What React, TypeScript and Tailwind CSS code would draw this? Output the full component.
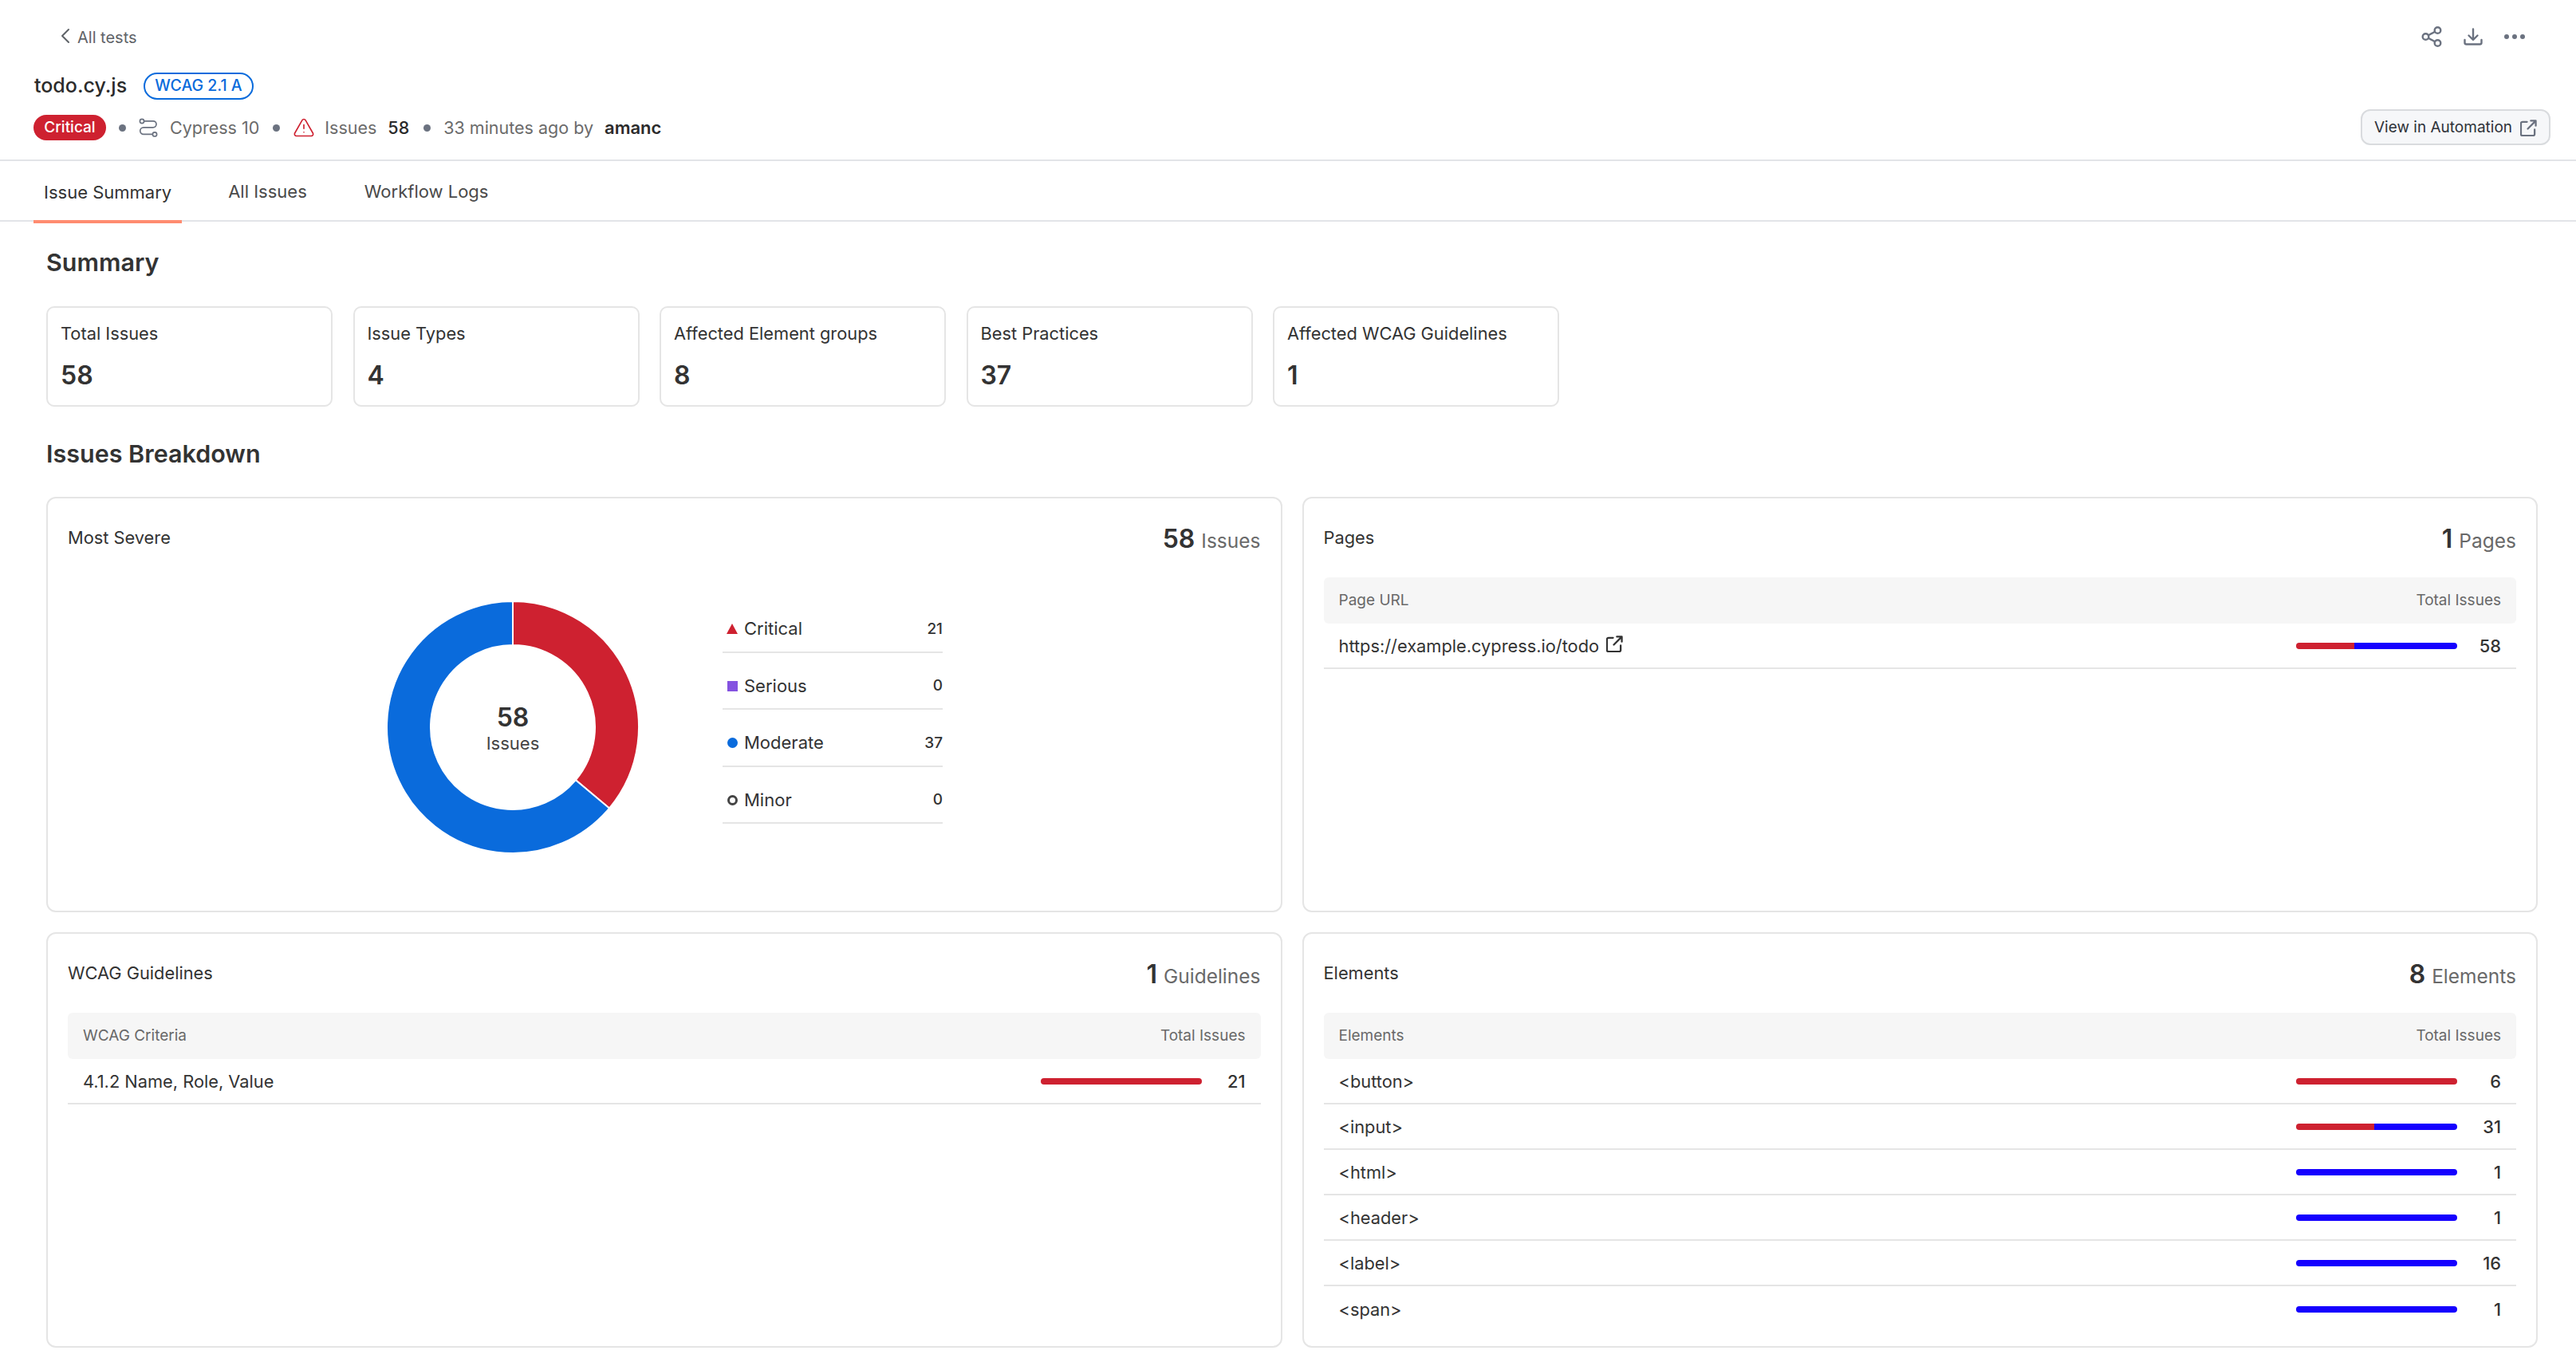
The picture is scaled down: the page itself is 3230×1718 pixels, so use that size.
import React from "react";
import { ChevronLeft, TriangleAlert } from "lucide-react";

function ExternalIcon({ className }: { className: string }) {
  return (
    <svg viewBox="0 0 22 22" fill="none" stroke="currentColor" strokeWidth="2.400" strokeLinecap="round" strokeLinejoin="round" className={className}>
      <path d="M9 3H3a2 2 0 0 0-2 2v14a2 2 0 0 0 2 2h14a2 2 0 0 0 2-2v-6" />
      <path d="M10 12 20 2M14 1.500h6.500V8" />
    </svg>
  );
}

function Dot() {
  return <span className="block w-[9px] h-[9px] rounded-full bg-[#6b7280] shrink-0" />;
}

function Bar({ red, blue }: { red: number; blue: number }) {
  return (
    <div className="flex w-[202px] h-[8px] rounded-full overflow-hidden shrink-0">
      {red > 0 && <div className="bg-[#ce2130]" style={{ width: `${red}%` }} />}
      {blue > 0 && <div className="bg-[#1500ff]" style={{ width: `${blue}%` }} />}
    </div>
  );
}

function Stat({ label, value }: { label: string; value: string }) {
  return (
    <div className="w-[359px] h-[126px] border-2 border-[#e5e5e5] rounded-[10px] pl-[16px] pt-[18px]">
      <div className="text-[21.800px] leading-[28px] text-[#333333]">{label}</div>
      <div className="mt-[20px] text-[32px] leading-[38px] font-semibold text-[#333333]">{value}</div>
    </div>
  );
}

function Panel({ title, count, unit, children }: { title: string; count: string; unit: string; children: React.ReactNode }) {
  return (
    <div className="h-[521px] border-2 border-[#e5e5e5] rounded-[12px] px-[25px]">
      <div className="flex justify-between items-center h-[99px]">
        <span className="text-[21.800px] text-[#333333]">{title}</span>
        <span className="flex items-baseline gap-[8px] pt-[3px]">
          <span className="text-[32px] font-semibold text-[#333333]">{count}</span>
          <span className="text-[24.500px] text-[#696969]">{unit}</span>
        </span>
      </div>
      {children}
    </div>
  );
}

function TableHead({ left }: { left: string }) {
  return (
    <div className="flex justify-between items-center h-[58px] bg-[#f6f6f6] rounded-[6px] px-[19px] text-[19px] text-[#696969]">
      <span>{left}</span>
      <span>Total Issues</span>
    </div>
  );
}

function Row({ label, count, red, blue, icon, last }: { label: string; count: string; red: number; blue: number; icon?: boolean; last?: boolean }) {
  return (
    <div className={last ? "flex items-center h-[57px] px-[19px] text-[21.800px] text-[#333333]" : "flex items-center h-[57px] border-b-2 border-[#e5e5e5] px-[19px] text-[21.800px] text-[#333333]"}>
      <span className="flex-1 flex items-center gap-[9px] pt-[1px]">
        {label}
        {icon && <ExternalIcon className="w-[21px] h-[21px] mb-[5px]" />}
      </span>
      <Bar red={red} blue={blue} />
      <span className="w-[55px] text-right font-medium pt-[1px]">{count}</span>
    </div>
  );
}

function LegendRow({ marker, label, value }: { marker: React.ReactNode; label: string; value: string }) {
  return (
    <div className="flex items-center h-[71.500px] pt-[14px] border-b-2 border-[#e5e5e5] text-[#333333]">
      <span className="w-[27px] pl-[6px] flex items-center">{marker}</span>
      <span className="flex-1 text-[22px]">{label}</span>
      <span className="text-[19px] font-medium">{value}</span>
    </div>
  );
}

function Donut() {
  return (
    <div className="relative w-[316px] h-[316px] shrink-0 mt-[7px]">
      <svg viewBox="0 0 316 316" className="w-full h-full">
        <path d="M158 0A158 158 0 0 1 279 259.600L236.900 224.200A103 103 0 0 0 158 55Z" fill="#ce2130" stroke="#ffffff" strokeWidth="2" />
        <path d="M279 259.600A158 158 0 1 1 158 0V55A103 103 0 1 0 236.900 224.200Z" fill="#0a6bdc" stroke="#ffffff" strokeWidth="2" />
      </svg>
      <div className="absolute inset-0 flex flex-col items-center justify-center pt-[3px] text-[#333333]">
        <span className="text-[32px] leading-[36px] font-semibold">58</span>
        <span className="text-[22px] leading-[28px] text-[#444444]">Issues</span>
      </div>
    </div>
  );
}

export default function App() {
  return (
    <div className="w-full h-[1718px] bg-white font-['Inter',sans-serif] overflow-hidden">
      <header className="relative h-[202px] border-b-2 border-[#e2e4e8]">
        <div className="flex items-center h-[94px] pl-[66px] text-[20px] text-[#5f6368]">
          <ChevronLeft className="w-[32px] h-[32px] -mt-[4px] -mr-[1px]" strokeWidth={1.500} />
          <span>All tests</span>
        </div>
        <div className="flex items-center gap-[21px] -mt-[3px] h-[34px] pl-[43px]">
          <span className="text-[25px] font-medium text-[#2b2b2b]">todo.cy.js</span>
          <span className="h-[34px] px-[12px] flex items-center rounded-full border-2 border-[#0a6bdc] text-[19.500px] font-medium text-[#0a6bdc]">WCAG 2.1 A</span>
        </div>
        <div className="flex items-center mt-[19px] h-[32px] pl-[42px] text-[21.500px] text-[#6b6b6b]">
          <span className="h-[32px] w-[91px] rounded-full bg-[#ce2130] flex items-center justify-center text-[19px] font-medium text-white">Critical</span>
          <span className="ml-[16px]"><Dot /></span>
          <svg viewBox="0 0 24 24" fill="none" stroke="currentColor" strokeWidth="1.700" className="ml-[16px] w-[24px] h-[24px] text-[#6b7280]">
            <circle cx="4" cy="4" r="2.600" />
            <path d="M6.600 3.800H18a4 4 0 0 1 0 8H6a4.300 4.300 0 0 0 0 8.600H17.400" />
            <circle cx="20" cy="20.400" r="2.600" />
          </svg>
          <span className="ml-[15px]">Cypress 10</span>
          <span className="ml-[17px]"><Dot /></span>
          <TriangleAlert className="ml-[16px] w-[28px] h-[28px] text-[#ce2130]" strokeWidth={1.400} />
          <span className="ml-[12px]">Issues</span>
          <span className="ml-[14px] font-medium text-[#2b2b2b]">58</span>
          <span className="ml-[18px]"><Dot /></span>
          <span className="ml-[16px]">33 minutes ago by</span>
          <span className="ml-[14px] font-semibold text-[22px] text-[#2b2b2b]">amanc</span>
        </div>
        <div className="absolute right-[64px] top-[33px] flex items-center gap-[27px] text-[#6b7280]">
          <svg viewBox="0 0 26 26" fill="none" stroke="currentColor" strokeWidth="2.400" className="w-[26px] h-[26px]">
            <circle cx="20.500" cy="5" r="3.800" />
            <circle cx="5.500" cy="13" r="3.800" />
            <circle cx="20.500" cy="21" r="3.800" />
            <path d="M8.900 11.200 17.100 6.800M8.900 14.800 17.100 19.200" />
          </svg>
          <svg viewBox="0 0 24 22" fill="none" stroke="currentColor" strokeWidth="2.400" strokeLinecap="round" strokeLinejoin="round" className="w-[24px] h-[22px]">
            <path d="M12 1.500v13M6.500 9.500 12 15l5.500-5.500M1.500 15v3.500a2 2 0 0 0 2 2h17a2 2 0 0 0 2-2V15" />
          </svg>
          <svg viewBox="0 0 26 6" fill="currentColor" className="w-[26px] h-[6px]">
            <circle cx="3" cy="3" r="3" />
            <circle cx="13" cy="3" r="3" />
            <circle cx="23" cy="3" r="3" />
          </svg>
        </div>
        <div className="absolute right-[32px] top-[137px] h-[45px] w-[238px] pt-[2px] rounded-[12px] border-2 border-[#d9dbde] bg-[#f6f7f9] flex items-center justify-center gap-[10px] text-[19px] text-[#2f333a]">
          <span>View in Automation</span>
          <ExternalIcon className="w-[21px] h-[21px] text-[#6b7280]" />
        </div>
      </header>

      <nav className="flex h-[76px] border-b-2 border-[#e2e4e8] pl-[42px] gap-[58px] text-[22px] text-[#4a4a4a]">
        <div className="relative px-[13px] pt-[2px] h-[76px] flex items-center text-[#333333]">
          Issue Summary
          <span className="absolute left-0 right-0 bottom-[-2px] h-[4px] bg-[#ff8c70]" />
        </div>
        <div className="pt-[2px] flex items-center">All Issues</div>
        <div className="pl-[14px] pt-[2px] flex items-center">Workflow Logs</div>
      </nav>

      <main className="pl-[58px] pr-[48px]">
        <h2 className="pt-[32px] text-[30.500px] leading-[38px] font-semibold text-[#333333]">Summary</h2>
        <div className="flex gap-[25.500px] mt-[36px]">
          <Stat label="Total Issues" value="58" />
          <Stat label="Issue Types" value="4" />
          <Stat label="Affected Element groups" value="8" />
          <Stat label="Best Practices" value="37" />
          <Stat label="Affected WCAG Guidelines" value="1" />
        </div>
        <h2 className="mt-[40px] text-[30.500px] leading-[38px] font-semibold text-[#333333]">Issues Breakdown</h2>
        <div className="grid grid-cols-2 gap-x-[25px] gap-y-[25px] mt-[35px]">
          <Panel title="Most Severe" count="58" unit="Issues">
            <div className="flex items-start pl-[400px] pt-[23px]">
              <Donut />
              <div className="ml-[105px] w-[276px]">
                <LegendRow label="Critical" value="21" marker={<span className="w-0 h-0 border-x-[7px] border-x-transparent border-b-[13px] border-b-[#ce2130] -ml-[1px]" />} />
                <LegendRow label="Serious" value="0" marker={<span className="w-[13px] h-[13px] bg-[#8452e0]" />} />
                <LegendRow label="Moderate" value="37" marker={<span className="w-[13px] h-[13px] rounded-full bg-[#0a6bdc]" />} />
                <LegendRow label="Minor" value="0" marker={<span className="w-[13px] h-[13px] rounded-full border-[3px] border-[#444444]" />} />
              </div>
            </div>
          </Panel>
          <Panel title="Pages" count="1" unit="Pages">
            <TableHead left="Page URL" />
            <Row label="https://example.cypress.io/todo" count="58" red={36} blue={64} icon />
          </Panel>
          <Panel title="WCAG Guidelines" count="1" unit="Guidelines">
            <TableHead left="WCAG Criteria" />
            <Row label="4.1.2 Name, Role, Value" count="21" red={100} blue={0} />
          </Panel>
          <Panel title="Elements" count="8" unit="Elements">
            <TableHead left="Elements" />
            <Row label="<button>" count="6" red={100} blue={0} />
            <Row label="<input>" count="31" red={48.600} blue={51.400} />
            <Row label="<html>" count="1" red={0} blue={100} />
            <Row label="<header>" count="1" red={0} blue={100} />
            <Row label="<label>" count="16" red={0} blue={100} />
            <Row label="<span>" count="1" red={0} blue={100} last />
          </Panel>
        </div>
      </main>
    </div>
  );
}
